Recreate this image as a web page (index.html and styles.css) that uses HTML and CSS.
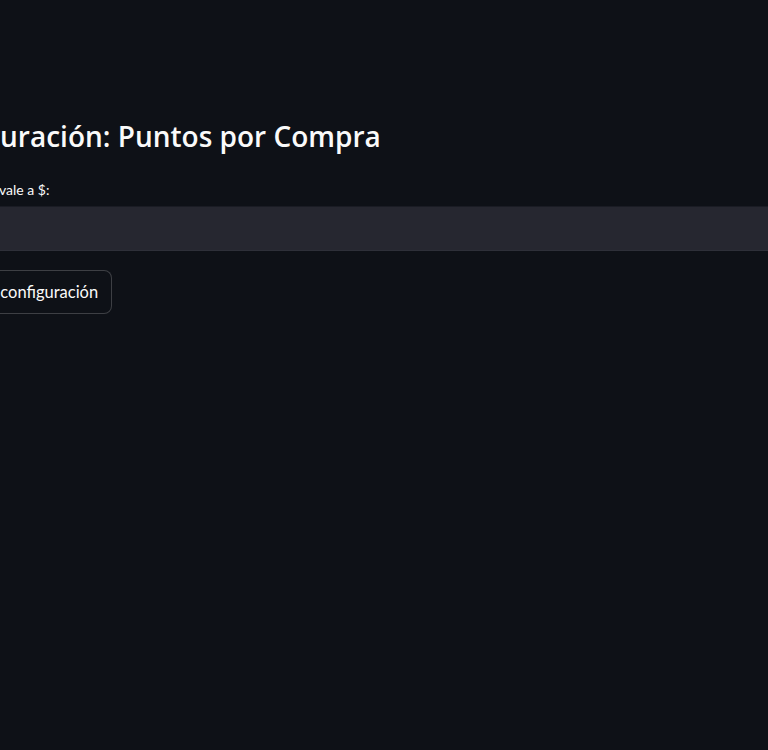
FILE: index.html
```html
<!DOCTYPE html>
<html lang="es">
<head>
  <meta charset="UTF-8" />
  <meta name="viewport" content="width=device-width, initial-scale=1.0" />
  <title>Configuración</title>
  <link rel="stylesheet" href="styles.css">
</head>
<body>
  <main class="main">
    <div class="block">
      <h3 class="title">Configuración: Puntos por Compra</h3>

      <div class="field">
        <label class="field-label" for="valor-punto">1 punto equivale a $:</label>
        <div class="input-wrap">
          <input id="valor-punto" class="input" type="text" value="100">
        </div>
      </div>

      <div class="actions">
        <button class="btn">Guardar configuración</button>
      </div>
    </div>
  </main>
</body>
</html>
```

FILE: styles.css
```css
* {
  box-sizing: border-box;
  margin: 0;
  padding: 0;
}

html, body {
  height: 100%;
}

body {
  font-family: Lato, "Open Sans", sans-serif;
  background-color: #0e1117;
  color: #fafafa;
  overflow: hidden;
}

.main {
  padding-top: 110px;
}

/* the column starts off screen to the left, like the capture */
.block {
  width: 960px;
  margin-left: -86px;
  display: flex;
  flex-direction: column;
}

.title {
  font-family: "Open Sans", sans-serif;
  font-size: 28px;
  font-weight: 600;
  line-height: 1.2;
  padding: 10px 0 26px;
}

.field {
  display: flex;
  flex-direction: column;
}

.field-label {
  font-size: 14px;
  line-height: 20px;
  margin: 0 0 6px 7px;
}

.input-wrap {
  background: #262730;
  border-top: 1px solid #1a1c24;
  border-bottom: 1px solid #2e3039;
  height: 45px;
}

.input {
  width: 100%;
  height: 100%;
  background: transparent;
  border: none;
  color: #fafafa;
  font-family: inherit;
  font-size: 16px;
  padding: 0 12px;
  outline: none;
}

.actions {
  margin: 19px 0 0 10px;
}

.btn {
  background: #0e1117;
  color: #fafafa;
  border: 1px solid rgba(250, 250, 250, 0.2);
  border-radius: 8px;
  font-family: inherit;
  font-size: 16.5px;
  padding: 0 13px;
  height: 44px;
  cursor: pointer;
}
```
